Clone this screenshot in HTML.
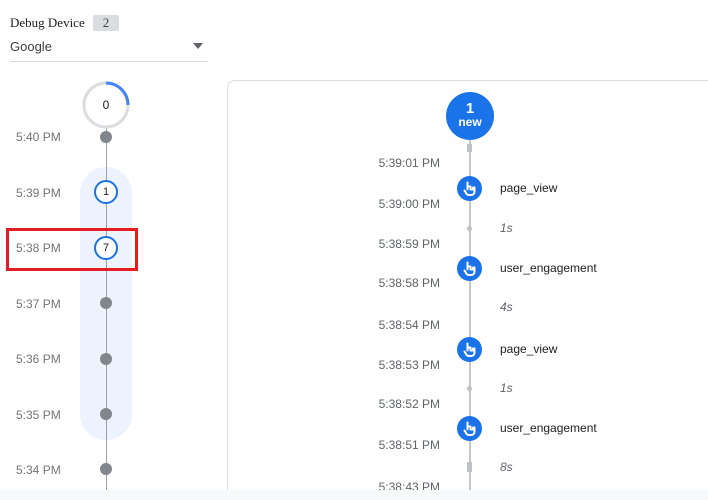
<!DOCTYPE html><html style="overflow:hidden;height:500px"><head><style>
body{margin:0;width:708px;height:500px;background:#fff;position:relative;overflow:hidden;font-family:"Liberation Sans",sans-serif}
.a{position:absolute}
.t{position:absolute;font-size:12px;color:#70757a}
.rt{position:absolute;right:268px;font-size:12px;color:#5f6368;text-align:right}
.ev{position:absolute;left:500px;font-size:12px;color:#202124}
.du{position:absolute;left:500px;font-size:12px;color:#5f6368;font-style:italic}
.dot{position:absolute;left:100px;width:12px;height:12px;border-radius:50%;background:#80868b}
.oc{position:absolute;left:94px;width:20px;height:20px;border:2px solid #1a73e8;border-radius:50%;background:#fff;font-size:11px;text-align:center;line-height:20px;color:#202124}
.ic{position:absolute;left:457px;width:25px;height:25px}
</style></head><body>
<div class="a" style="left:10px;top:15px;font-family:'Liberation Serif',serif;font-size:13px;color:#202124">Debug Device</div>
<div class="a" style="left:93px;top:15px;width:26px;height:16px;background:#dadce0;border-radius:2px;font-family:'Liberation Serif',serif;font-size:13px;text-align:center;line-height:16px;color:#3c4043">2</div>
<div class="a" style="left:10px;top:39px;font-size:13px;color:#3c4043">Google</div>
<div class="a" style="left:193px;top:43px;border-left:5px solid transparent;border-right:5px solid transparent;border-top:6px solid #5f6368"></div>
<div class="a" style="left:10px;top:61px;width:198px;height:1px;background:#dadce0"></div>
<div class="a" style="left:80px;top:167px;width:52px;height:273px;background:#e8f0fe;border-radius:26px;opacity:.8"></div>
<div class="a" style="left:106px;top:128px;width:1px;height:362px;background:#9aa0a6"></div>
<svg class="a" style="left:81px;top:80px" width="50" height="50"><circle cx="25" cy="25" r="22" fill="#fff" stroke="#dadce0" stroke-width="3"/><path d="M25 3 A22 22 0 0 1 47 25" fill="none" stroke="#4285f4" stroke-width="3"/><text x="25" y="29" font-size="12" text-anchor="middle" fill="#202124" font-family="Liberation Sans">0</text></svg>
<div class="t" style="left:16px;top:130px">5:40 PM</div><div class="dot" style="top:131px"></div>
<div class="t" style="left:16px;top:186px">5:39 PM</div><div class="oc" style="top:180px">1</div>
<div class="t" style="left:16px;top:241px">5:38 PM</div><div class="oc" style="top:236px">7</div>
<div class="t" style="left:16px;top:297px">5:37 PM</div><div class="dot" style="top:297px"></div>
<div class="t" style="left:16px;top:352px">5:36 PM</div><div class="dot" style="top:353px"></div>
<div class="t" style="left:16px;top:408px">5:35 PM</div><div class="dot" style="top:408px"></div>
<div class="t" style="left:16px;top:463px">5:34 PM</div><div class="dot" style="top:463px"></div>
<div class="a" style="left:6px;top:228px;width:132px;height:43px;border:3px solid #e51c23;box-sizing:border-box"></div>
<div class="a" style="left:227px;top:80px;width:500px;height:430px;border:1px solid #dadce0;border-radius:8px"></div>
<div class="a" style="left:469px;top:140px;width:2px;height:360px;background:#c4c7c5"></div>
<div class="a" style="left:467px;top:144px;width:5px;height:8px;background:#bdc1c6"></div>
<div class="a" style="left:467px;top:462px;width:5px;height:10px;background:#bdc1c6"></div>
<div class="a" style="left:467px;top:226px;width:5px;height:5px;border-radius:50%;background:#bdc1c6"></div>
<div class="a" style="left:467px;top:386px;width:5px;height:5px;border-radius:50%;background:#bdc1c6"></div>
<div class="a" style="left:446px;top:92px;width:48px;height:48px;border-radius:50%;background:#1a73e8;color:#fff;text-align:center;font-weight:bold"><div style="font-size:15px;margin-top:9px;line-height:15px">1</div><div style="font-size:12px;line-height:13px">new</div></div>
<div class="rt" style="top:156px">5:39:01 PM</div>
<div class="rt" style="top:197px">5:39:00 PM</div>
<div class="rt" style="top:237px">5:38:59 PM</div>
<div class="rt" style="top:276px">5:38:58 PM</div>
<div class="rt" style="top:318px">5:38:54 PM</div>
<div class="rt" style="top:358px">5:38:53 PM</div>
<div class="rt" style="top:397px">5:38:52 PM</div>
<div class="rt" style="top:438px">5:38:51 PM</div>
<div class="rt" style="top:480px">5:38:43 PM</div>
<svg class="ic" style="top:176px" viewBox="0 0 25 25"><circle cx="12.5" cy="12.5" r="12.5" fill="#1a73e8"/><path d="M10.5 6.5v7M10.5 10.5h3v3h2.5v-2h1.5v4c0 2-1.5 3.5-3.5 3.5h-2c-1.5 0-2.5-1-3-2l-1.5-2.5" fill="none" stroke="#fff" stroke-width="2" stroke-linecap="round" stroke-linejoin="round"/></svg>
<svg class="ic" style="top:256px" viewBox="0 0 25 25"><circle cx="12.5" cy="12.5" r="12.5" fill="#1a73e8"/><path d="M10.5 6.5v7M10.5 10.5h3v3h2.5v-2h1.5v4c0 2-1.5 3.5-3.5 3.5h-2c-1.5 0-2.5-1-3-2l-1.5-2.5" fill="none" stroke="#fff" stroke-width="2" stroke-linecap="round" stroke-linejoin="round"/></svg>
<svg class="ic" style="top:337px" viewBox="0 0 25 25"><circle cx="12.5" cy="12.5" r="12.5" fill="#1a73e8"/><path d="M10.5 6.5v7M10.5 10.5h3v3h2.5v-2h1.5v4c0 2-1.5 3.5-3.5 3.5h-2c-1.5 0-2.5-1-3-2l-1.5-2.5" fill="none" stroke="#fff" stroke-width="2" stroke-linecap="round" stroke-linejoin="round"/></svg>
<svg class="ic" style="top:416px" viewBox="0 0 25 25"><circle cx="12.5" cy="12.5" r="12.5" fill="#1a73e8"/><path d="M10.5 6.5v7M10.5 10.5h3v3h2.5v-2h1.5v4c0 2-1.5 3.5-3.5 3.5h-2c-1.5 0-2.5-1-3-2l-1.5-2.5" fill="none" stroke="#fff" stroke-width="2" stroke-linecap="round" stroke-linejoin="round"/></svg>
<div class="ev" style="top:181px">page_view</div>
<div class="du" style="top:221px">1s</div>
<div class="ev" style="top:261px">user_engagement</div>
<div class="du" style="top:300px">4s</div>
<div class="ev" style="top:342px">page_view</div>
<div class="du" style="top:381px">1s</div>
<div class="ev" style="top:421px">user_engagement</div>
<div class="du" style="top:460px">8s</div>
<div class="a" style="left:0;top:490px;width:708px;height:10px;background:#f8f9fa"></div>
</body></html>
